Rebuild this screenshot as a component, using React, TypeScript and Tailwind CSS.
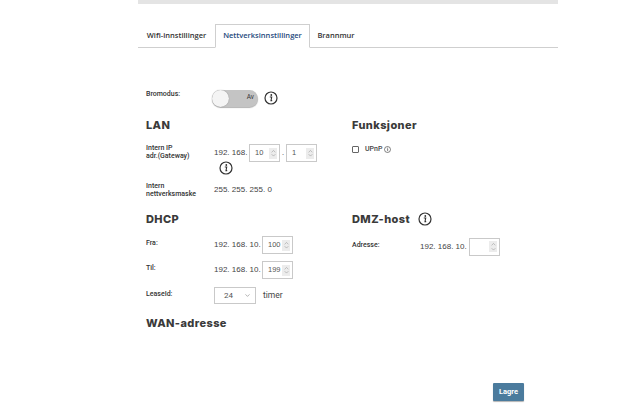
import React from 'react';
import { ChevronDown, ChevronUp } from 'lucide-react';

function InfoIcon({ size = 14 }: { size?: number }) {
  return (
    <svg width={size} height={size} viewBox="0 0 14 14" fill="none" className="shrink-0">
      <circle cx="7" cy="7" r="6" stroke="#333" strokeWidth="1.2" />
      <circle cx="7.3" cy="4" r="0.9" fill="#333" />
      <path d="M5.8 6h1.9l-.7 3.6h1.2" stroke="#333" strokeWidth="1.1" fill="none" />
    </svg>
  );
}

function Spinner({ value }: { value?: string }) {
  return (
    <div className="w-[31px] h-[18px] shrink-0 border border-[#c9c9c9] flex items-center justify-between pr-[2px] pl-[5px] font-['Liberation_Sans',sans-serif] text-[7.5px] text-[#555]">
      <span>{value}</span>
      <span className="w-[8px] h-[11px] bg-[#ececec] flex flex-col items-center justify-center text-[#777]">
        <ChevronUp size={7} strokeWidth={1.5} className="-mb-[1px]" />
        <ChevronDown size={7} strokeWidth={1.5} className="-mt-[1px]" />
      </span>
    </div>
  );
}

function Heading({ children }: { children: React.ReactNode }) {
  return <h2 className="font-['Inter',sans-serif] whitespace-nowrap text-[11px] leading-[14px] font-extrabold tracking-[0.4px] text-[#3a3a3a]">{children}</h2>;
}

function Label({ children }: { children: React.ReactNode }) {
  return <div className="w-[68px] shrink-0 text-[7px] leading-[8px] font-medium text-[#333]">{children}</div>;
}

function Ip({ children, w }: { children: React.ReactNode; w: string }) {
  return <span className={`${w} shrink-0 whitespace-nowrap font-['Liberation_Sans',sans-serif] text-[8px] text-[#444]`}>{children}</span>;
}

export default function App() {
  return (
    <div className="h-[415px] w-[629px] overflow-hidden bg-white font-['Roboto',sans-serif]">
      <div className="ml-[138px] w-[420px]">
        <div className="h-[4px] bg-[#e4e4e4]" />

        {/* Tabs */}
        <div className="mt-[20px] flex h-[24px] border-b border-[#cfcfcf] font-['Open_Sans',sans-serif] text-[7.5px] font-semibold">
          <div className="flex w-[77px] items-center justify-center text-[#333]">Wifi-innstillinger</div>
          <div className="-mb-px flex w-[95px] items-center justify-center border border-[#cfcfcf] border-b-white bg-white text-[#1f4a7d]">Nettverksinnstillinger</div>
          <div className="flex w-[52px] items-center justify-center text-[#333]">Brannmur</div>
        </div>

        <div className="pl-[8px]">
          {/* Bromodus */}
          <div className="mt-[41px] flex h-[18px] items-center">
            <div className="-mt-[8px] w-[66px] text-[7px] font-medium text-[#333]">Bromodus:</div>
            <div className="flex h-[17px] w-[46px] items-center justify-between rounded-full bg-[#c4c4c4] shadow-[0_1px_1px_rgba(0,0,0,0.3)]">
              <span className="h-[17px] w-[17px] rounded-full bg-[#f4f4f4] shadow-[0_0_1px_rgba(0,0,0,0.4)]" />
              <span className="pr-[4px] text-[6.5px] text-[#333]">Av</span>
            </div>
            <span className="ml-[6px]"><InfoIcon /></span>
          </div>

          <div className="mt-[11px] grid grid-cols-[206px_1fr]">
            {/* Left column */}
            <div>
              <Heading>LAN</Heading>
              <div className="mt-[12px] flex">
                <Label>Intern IP<br />adr.(Gateway)</Label>
                <div>
                  <div className="flex items-center">
                    <Ip w="w-[35px]">192. 168.</Ip>
                    <Spinner value="10" />
                    <span className="w-[6px] text-center text-[8px] text-[#444]">.</span>
                    <Spinner value="1" />
                  </div>
                  <div className="ml-[5px] mt-[-1px] h-[14px]"><InfoIcon size={14} /></div>
                </div>
              </div>
              <div className="mt-[7px] flex items-center">
                <Label>Intern<br />nettverksmaske</Label>
                <Ip w="w-[60px]">255. 255. 255. 0</Ip>
              </div>

              <div className="mt-[14px]"><Heading>DHCP</Heading></div>
              <div className="mt-[10px] flex">
                <div className="pt-[3px]"><Label>Fra:</Label></div>
                <div className="flex items-center">
                  <Ip w="w-[48px]">192. 168. 10.</Ip>
                  <Spinner value="100" />
                </div>
              </div>
              <div className="mt-[7px] flex">
                <div className="pt-[3px]"><Label>Til:</Label></div>
                <div className="flex items-center">
                  <Ip w="w-[48px]">192. 168. 10.</Ip>
                  <Spinner value="199" />
                </div>
              </div>
              <div className="mt-[8px] flex items-center">
                <div className="-mt-[4px]"><Label>LeaseId:</Label></div>
                <div className="flex h-[17px] w-[42px] items-center justify-between border border-[#c9c9c9] pl-[9px] pr-[4px] text-[8px] text-[#555]">
                  24
                  <ChevronDown size={7} strokeWidth={1.5} />
                </div>
                <span className="ml-[7px] text-[8.5px] text-[#444]">timer</span>
              </div>

              <div className="mt-[12px]"><Heading>WAN-adresse</Heading></div>
            </div>

            {/* Right column */}
            <div>
              <Heading>Funksjoner</Heading>
              <div className="mt-[12px] flex items-center">
                <span className="h-[7px] w-[7px] rounded-[1px] border border-[#666]" />
                <span className="ml-[6px] text-[7px] font-medium text-[#444]">UPnP</span>
                <span className="ml-[2px]"><InfoIcon size={7} /></span>
              </div>

              <div className="mt-[57px] flex items-center">
                <Heading>DMZ-host</Heading>
                <span className="ml-[8px]"><InfoIcon /></span>
              </div>
              <div className="mt-[12px] flex">
                <div className="pt-[3px]"><Label>Adresse:</Label></div>
                <div className="flex items-center">
                  <Ip w="w-[49px]">192. 168. 10.</Ip>
                  <Spinner />
                </div>
              </div>
            </div>
          </div>
        </div>

        <div className="mt-[53px] flex justify-end pr-[34px]">
          <button className="h-[18px] w-[31px] rounded-[1px] bg-[#4b7b9d] text-[7.5px] font-bold text-white shadow-[0_1px_1px_rgba(0,0,0,0.3)]">Lagre</button>
        </div>
      </div>
    </div>
  );
}
